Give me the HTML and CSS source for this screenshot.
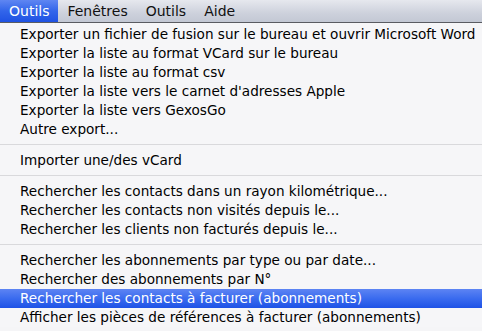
FILE: index.html
```html
<!DOCTYPE html>
<html lang="fr">
<head>
<meta charset="utf-8">
<link rel="stylesheet" href="styles.css">
</head>
<body>
<div class="menubar">
  <span class="mb-item active">Outils</span>
  <span class="mb-item">Fenêtres</span>
  <span class="mb-item">Outils</span>
  <span class="mb-item">Aide</span>
</div>
<ul class="menu">
  <li class="item">Exporter un fichier de fusion sur le bureau et ouvrir Microsoft Word</li>
  <li class="item">Exporter la liste au format VCard sur le bureau</li>
  <li class="item">Exporter la liste au format csv</li>
  <li class="item">Exporter la liste vers le carnet d'adresses Apple</li>
  <li class="item">Exporter la liste vers GexosGo</li>
  <li class="item">Autre export...</li>
  <li class="sep"></li>
  <li class="item">Importer une/des vCard</li>
  <li class="sep"></li>
  <li class="item">Rechercher les contacts dans un rayon kilométrique...</li>
  <li class="item">Rechercher les contacts non visités depuis le...</li>
  <li class="item">Rechercher les clients non facturés depuis le...</li>
  <li class="sep"></li>
  <li class="item">Rechercher les abonnements par type ou par date...</li>
  <li class="item">Rechercher des abonnements par N°</li>
  <li class="item selected">Rechercher les contacts à facturer (abonnements)</li>
  <li class="item">Afficher les pièces de références à facturer (abonnements)</li>
</ul>
</body>
</html>
```

FILE: styles.css
```css
html, body {
  margin: 0;
  padding: 0;
  width: 482px;
  height: 331px;
  overflow: hidden;
  background: #f5f5f7;
  font-family: "DejaVu Sans", "Lucida Grande", sans-serif;
}
.menubar {
  display: flex;
  height: 22px;
  background: linear-gradient(#e6e8ee, #cdd1dc 60%, #c3c8d4);
  border-bottom: 1px solid #5a5c62;
  box-sizing: content-box;
}
.mb-item {
  display: flex;
  align-items: center;
  padding: 0 9px;
  font-size: 14px;
  color: #111;
  height: 22px;
}
.mb-item.active {
  background: linear-gradient(#5f86f2, #3265ea 50%, #1f52e3);
  color: #fff;
}
.menu {
  list-style: none;
  margin: 0;
  padding: 2px 0 0 0;
  background: #f6f6f8;
}
.item {
  height: 19px;
  line-height: 19px;
  padding-left: 20px;
  font-size: 13.6px;
  color: #000;
  white-space: nowrap;
}
.item.selected {
  background: linear-gradient(#5d84f3, #3a6bef 50%, #1e52e6);
  color: #fff;
}
.sep {
  height: 1px;
  margin: 5px 0 6px 0;
  background: #d9d9dc;
}
```
